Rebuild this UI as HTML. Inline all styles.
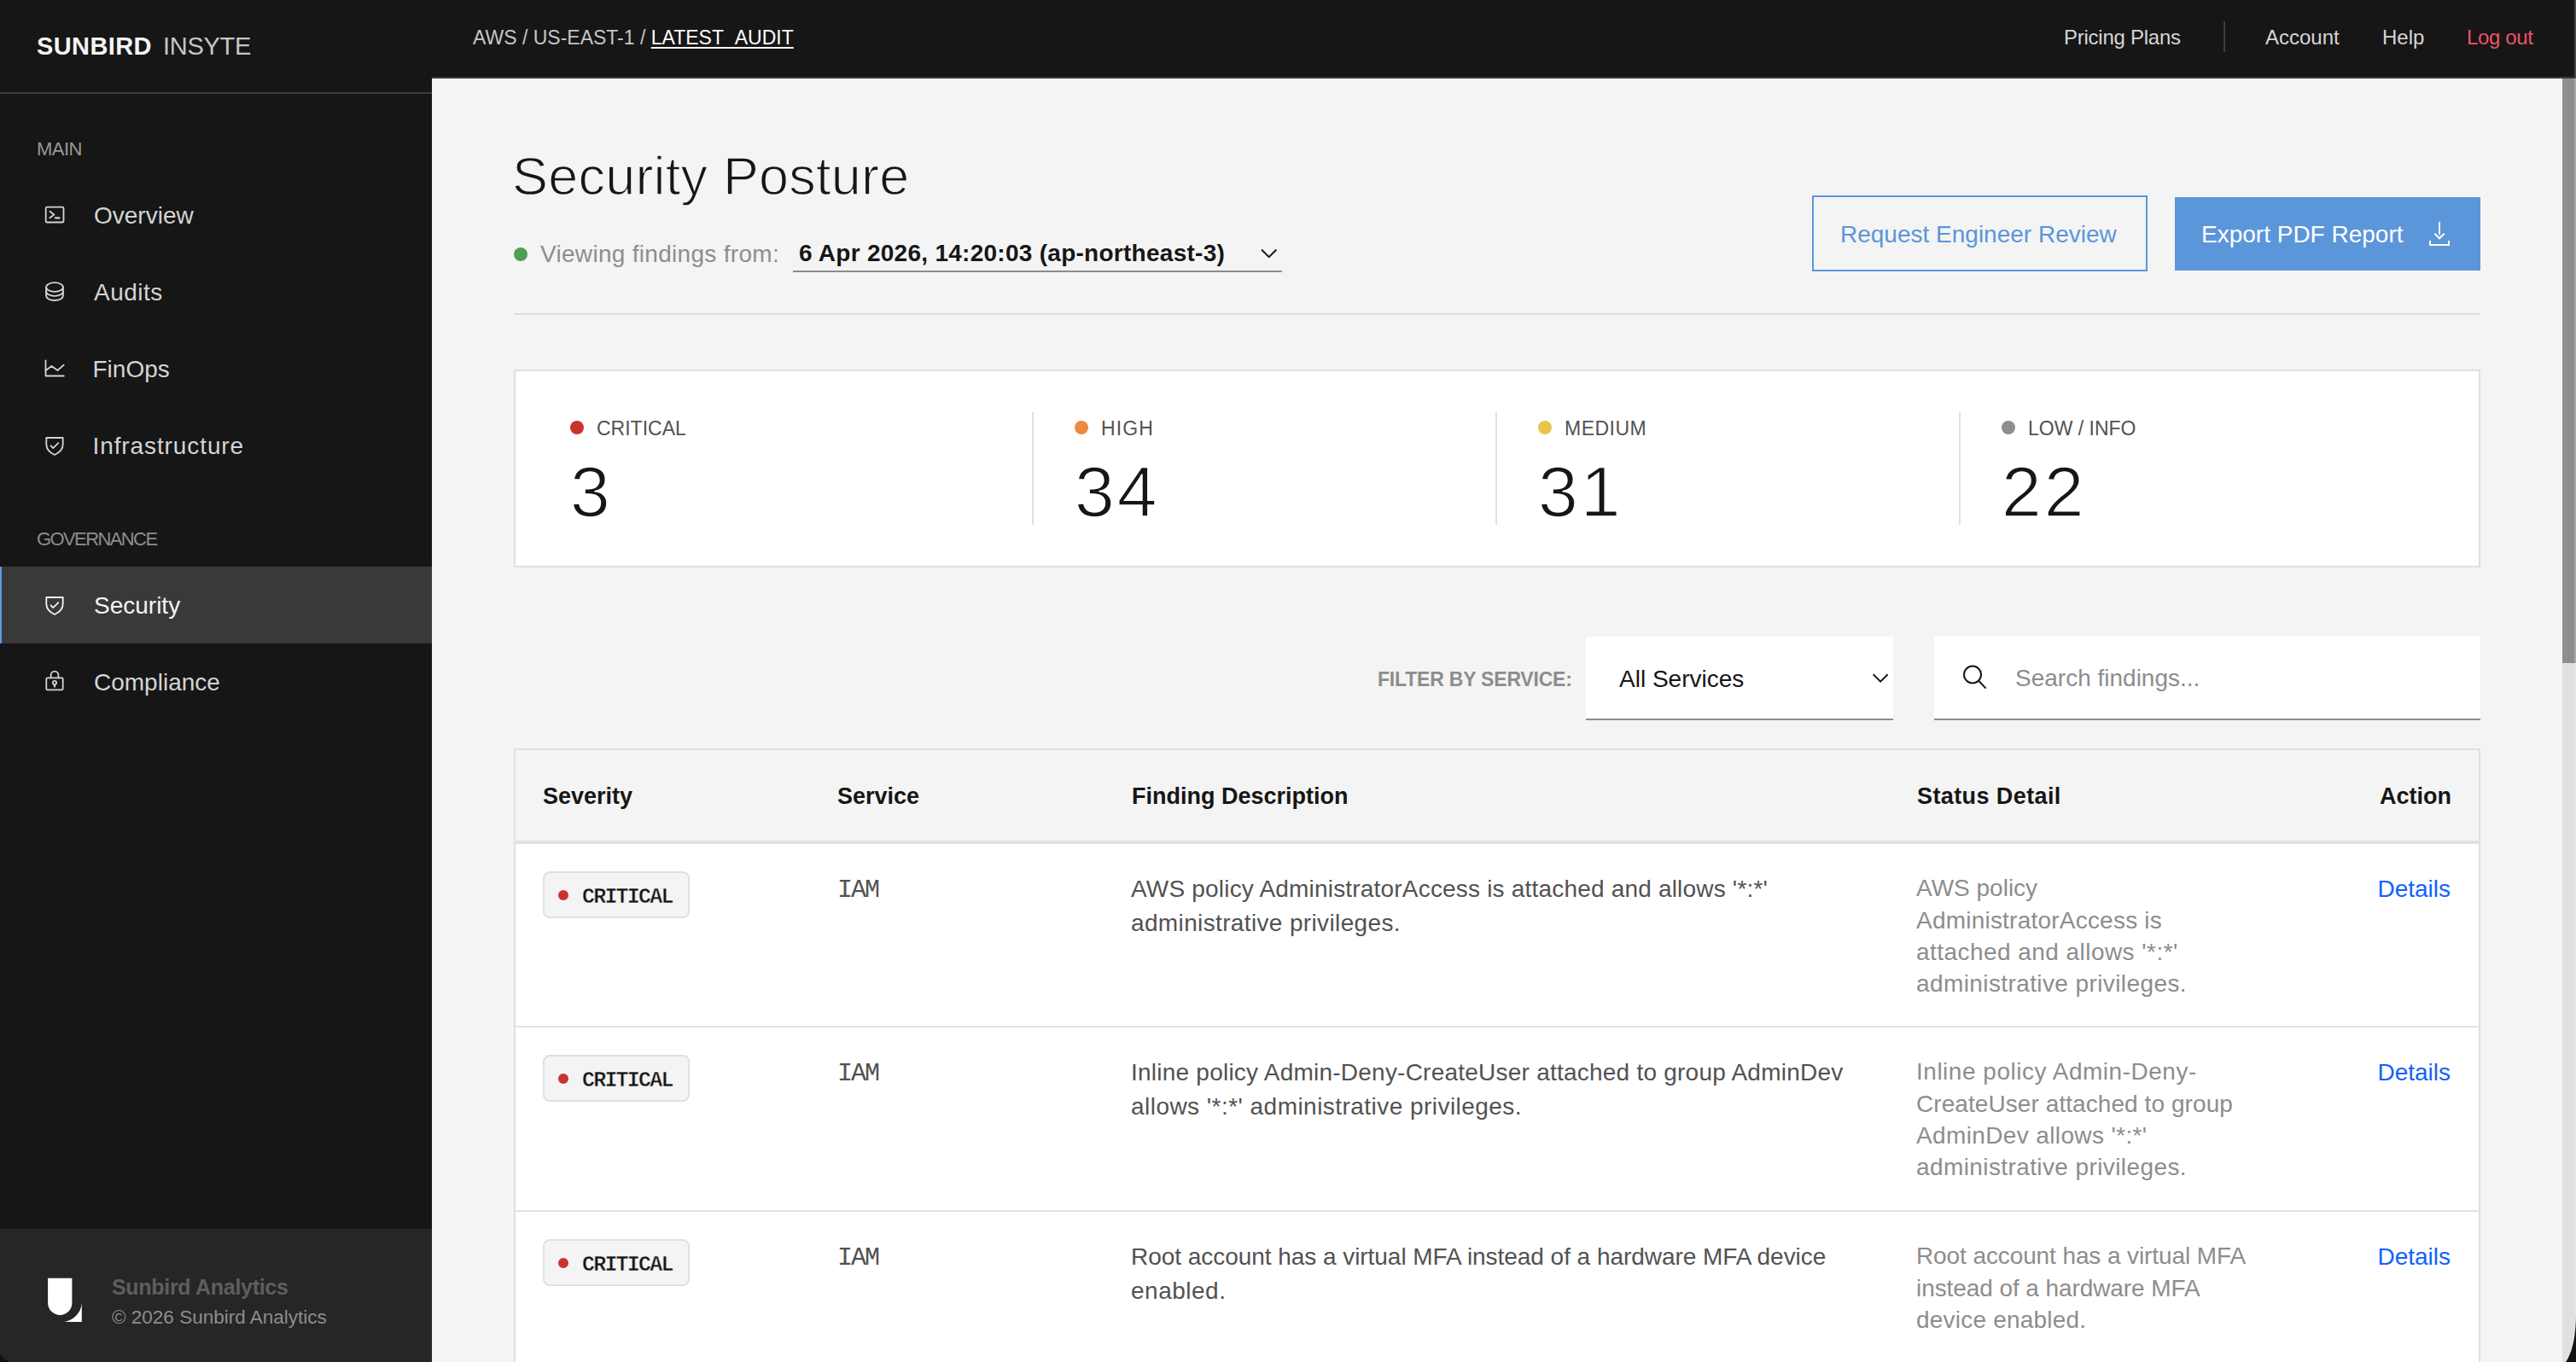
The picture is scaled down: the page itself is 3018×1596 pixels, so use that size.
<!DOCTYPE html>
<html><head><meta charset="utf-8"><title>Security Posture - Sunbird Insyte</title>
<style>
html,body{margin:0;padding:0;}
body{width:3018px;height:1596px;overflow:hidden;position:relative;background:#f4f4f4;font-family:"Liberation Sans", sans-serif;}
body>div,body>svg{position:absolute;}
.t{white-space:nowrap;}
</style></head><body>
<div style="left:0px;top:0px;width:506px;height:1596px;background:#161616"></div>
<div style="left:506px;top:0px;width:2512px;height:90px;background:#161616"></div>
<div style="left:506px;top:90px;width:2510px;height:2px;background:#393939"></div>
<div style="left:3002px;top:92px;width:16px;height:1504px;background:#e0e0e0"></div>
<div style="left:3002px;top:92px;width:14px;height:685px;background:#8e8e8e"></div>
<div style="left:3016px;top:92px;width:2px;height:1504px;background:#e6e6e6"></div>
<div style="left:3016px;top:92px;width:2px;height:685px;background:#a9a9a9"></div>
<div style="left:3016px;top:0px;width:2px;height:92px;background:#444"></div>
<div class="t" style="left:43px;top:35.95px;font-size:29px;line-height:36px;color:#f4f4f4;font-weight:700;letter-spacing:0.4px;">SUNBIRD</div>
<div class="t" style="left:191px;top:35.95px;font-size:29px;line-height:36px;color:#c6c6c6;letter-spacing:-0.3px;">INSYTE</div>
<div style="left:0px;top:108px;width:506px;height:2px;background:#393939"></div>
<div class="t" style="left:43px;top:161.37px;font-size:22px;line-height:28px;color:#999999;letter-spacing:-0.5px;">MAIN</div>
<div class="t" style="left:43px;top:618.37px;font-size:22px;line-height:28px;color:#8d8d8d;letter-spacing:-1.6px;">GOVERNANCE</div>
<svg style="left:44px;top:232px;" width="40" height="40" viewBox="0 0 40 40"><g fill="none" stroke="#d4d4d4" stroke-width="1.8" stroke-linecap="round" stroke-linejoin="round"><rect x="9.7" y="10.7" width="20.8" height="17.8" rx="1.6"/><path d="M14.4 15.7 L19.4 19.5 L14.4 23.3"/><path d="M20.9 23.3 H25.5" stroke-width="2.2"/></g></svg>
<div class="t" style="left:110px;top:235.29px;font-size:28px;line-height:35px;color:#d4d4d4;">Overview</div>
<svg style="left:44px;top:322px;" width="40" height="40" viewBox="0 0 40 40"><g fill="none" stroke="#d4d4d4" stroke-width="1.8" stroke-linecap="round" stroke-linejoin="round"><ellipse cx="20" cy="14.5" rx="9.9" ry="5.4"/><path d="M10.1 14.5 V24.6 A9.9 5.4 0 0 0 29.9 24.6 V14.5"/><path d="M10.1 19.5 A9.9 5.4 0 0 0 29.9 19.5"/></g></svg>
<div class="t" style="left:110px;top:325.29px;font-size:28px;line-height:35px;color:#d4d4d4;letter-spacing:0.5px;">Audits</div>
<svg style="left:44px;top:412px;" width="40" height="40" viewBox="0 0 40 40"><g fill="none" stroke="#d4d4d4" stroke-width="1.8" stroke-linecap="round" stroke-linejoin="round"><path d="M9.5 10.4 V28.5 H30.8"/><path d="M9.5 22.2 L16.4 17 L23.5 22 L30.7 15.6"/></g></svg>
<div class="t" style="left:108.5px;top:415.29px;font-size:28px;line-height:35px;color:#d4d4d4;">FinOps</div>
<svg style="left:44px;top:502px;" width="40" height="40" viewBox="0 0 40 40"><g fill="none" stroke="#d4d4d4" stroke-width="1.8" stroke-linecap="round" stroke-linejoin="round"><path d="M10.3 11 H29.7 V18.5 C29.7 24.5 25.5 28.5 20 31 C14.5 28.5 10.3 24.5 10.3 18.5 Z"/><path d="M15.6 20.3 L18.2 23.1 L24.4 17.1"/></g></svg>
<div class="t" style="left:108.5px;top:505.29px;font-size:28px;line-height:35px;color:#d4d4d4;letter-spacing:0.9px;">Infrastructure</div>
<div style="left:0px;top:664px;width:506px;height:90px;background:#393939"></div>
<div style="left:0px;top:664px;width:2px;height:90px;background:#5b9bea"></div>
<svg style="left:44px;top:689px;" width="40" height="40" viewBox="0 0 40 40"><g fill="none" stroke="#f4f4f4" stroke-width="1.8" stroke-linecap="round" stroke-linejoin="round"><path d="M10.3 11 H29.7 V18.5 C29.7 24.5 25.5 28.5 20 31 C14.5 28.5 10.3 24.5 10.3 18.5 Z"/><path d="M15.6 20.3 L18.2 23.1 L24.4 17.1"/></g></svg>
<div class="t" style="left:110px;top:692.29px;font-size:28px;line-height:35px;color:#f4f4f4;">Security</div>
<svg style="left:44px;top:779px;" width="40" height="40" viewBox="0 0 40 40"><g fill="none" stroke="#d4d4d4" stroke-width="1.8" stroke-linecap="round" stroke-linejoin="round"><rect x="10.3" y="15.3" width="19.4" height="14.1" rx="1.5"/><path d="M15.6 15.3 V12 A4.4 4.4 0 0 1 24.4 12 V15.3"/><circle cx="20" cy="20.9" r="2.1"/><path d="M20 23 V25.6" stroke-width="2.2"/></g></svg>
<div class="t" style="left:110px;top:782.29px;font-size:28px;line-height:35px;color:#d4d4d4;">Compliance</div>
<div style="left:0px;top:1440px;width:506px;height:156px;background:#262626"></div>
<svg style="left:50px;top:1490px;" width="50" height="66" viewBox="0 0 50 66"><path fill="#fff" d="M6.1 7.8 H34.4 V36.75 A14.15 14.15 0 0 1 6.1 36.75 Z"/><path fill="#fff" d="M45.8 36.8 V58.9 H25.2 A24 24 0 0 0 45.8 36.8 Z"/></svg>
<div class="t" style="left:131px;top:1492.83px;font-size:25px;line-height:31px;color:#5e5e5e;font-weight:700;letter-spacing:-0.3px;">Sunbird Analytics</div>
<div class="t" style="left:131px;top:1530.20px;font-size:22.5px;line-height:28px;color:#8d8d8d;">© 2026 Sunbird Analytics</div>
<div class="t" style="left:554px;top:29.53px;font-size:23px;line-height:29px;color:#c6c6c6;">AWS / US-EAST-1 / <span style="color:#fff;text-decoration:underline;text-decoration-thickness:2px;text-underline-offset:3px">LATEST_AUDIT</span></div>
<div class="t" style="left:2418px;top:28.68px;font-size:24px;line-height:30px;color:#d6d6d6;letter-spacing:-0.25px;">Pricing Plans</div>
<div style="left:2605px;top:25px;width:2px;height:36px;background:#3d3d3d"></div>
<div class="t" style="left:2654px;top:28.68px;font-size:24px;line-height:30px;color:#d6d6d6;">Account</div>
<div class="t" style="left:2791px;top:28.68px;font-size:24px;line-height:30px;color:#d6d6d6;">Help</div>
<div class="t" style="left:2890px;top:28.68px;font-size:24px;line-height:30px;color:#ec5468;letter-spacing:-0.35px;">Log out</div>
<div class="t" style="left:600px;top:167.16px;font-size:63px;line-height:79px;color:#161616;letter-spacing:0.2px;-webkit-text-stroke:1.4px #f4f4f4;">Security Posture</div>
<div style="left:602px;top:290px;width:16px;height:16px;background:#4f9f55;border-radius:50%"></div>
<div class="t" style="left:633px;top:280.29px;font-size:28px;line-height:35px;color:#8d8d8d;letter-spacing:0.3px;">Viewing findings from:</div>
<div class="t" style="left:936px;top:279.29px;font-size:28px;line-height:35px;color:#161616;font-weight:700;letter-spacing:0.27px;">6 Apr 2026, 14:20:03 (ap-northeast-3)</div>
<div style="left:929px;top:317px;width:573px;height:2px;background:#8d8d8d"></div>
<svg style="left:1474px;top:286px;" width="26" height="22" viewBox="0 0 26 22"><path d="M4 6.5 L12.7 15.2 L21.4 6.5" fill="none" stroke="#161616" stroke-width="2"/></svg>
<div style="left:602px;top:367px;width:2304px;height:2px;background:#dedede"></div>
<div style="left:2123px;top:229px;width:393px;height:89px;border:2px solid #5a96dc;box-sizing:border-box"></div>
<div class="t" style="left:2156px;top:256.79px;font-size:28px;line-height:35px;color:#5a96db;">Request Engineer Review</div>
<div style="left:2548px;top:231px;width:358px;height:86px;background:#5b96da"></div>
<div class="t" style="left:2579px;top:256.79px;font-size:28px;line-height:35px;color:#ffffff;">Export PDF Report</div>
<svg style="left:2840px;top:254px;" width="36" height="40" viewBox="0 0 36 40"><g fill="none" stroke="#fff" stroke-width="2"><path d="M18 6 V21"/><path d="M12.4 19.7 L18 25.3 L23.6 19.7"/><path d="M7 28 V33 H29 V28"/></g></svg>
<div style="left:602px;top:433px;width:2304px;height:232px;background:#fff;border:2px solid #e0e0e0;box-sizing:border-box"></div>
<div style="left:668px;top:493px;width:16px;height:16px;background:#c9332f;border-radius:50%"></div>
<div class="t" style="left:699px;top:487.53px;font-size:23px;line-height:29px;color:#525252;">CRITICAL</div>
<div class="t" style="left:668px;top:524.38px;font-size:84px;line-height:105px;color:#161616;-webkit-text-stroke:1.6px #ffffff;">3</div>
<div style="left:1209px;top:483px;width:2px;height:132px;background:#e0e0e0"></div>
<div style="left:1259px;top:493px;width:16px;height:16px;background:#ee8a3d;border-radius:50%"></div>
<div class="t" style="left:1290px;top:487.53px;font-size:23px;line-height:29px;color:#525252;letter-spacing:1.1px;">HIGH</div>
<div class="t" style="left:1259px;top:524.38px;font-size:84px;line-height:105px;color:#161616;letter-spacing:3px;-webkit-text-stroke:1.6px #ffffff;">34</div>
<div style="left:1752px;top:483px;width:2px;height:132px;background:#e0e0e0"></div>
<div style="left:1802px;top:493px;width:16px;height:16px;background:#e8c44a;border-radius:50%"></div>
<div class="t" style="left:1833px;top:487.53px;font-size:23px;line-height:29px;color:#525252;letter-spacing:0.5px;">MEDIUM</div>
<div class="t" style="left:1802px;top:524.38px;font-size:84px;line-height:105px;color:#161616;letter-spacing:3px;-webkit-text-stroke:1.6px #ffffff;">31</div>
<div style="left:2295px;top:483px;width:2px;height:132px;background:#e0e0e0"></div>
<div style="left:2345px;top:493px;width:16px;height:16px;background:#8e8e8e;border-radius:50%"></div>
<div class="t" style="left:2376px;top:487.53px;font-size:23px;line-height:29px;color:#525252;">LOW / INFO</div>
<div class="t" style="left:2345px;top:524.38px;font-size:84px;line-height:105px;color:#161616;letter-spacing:3px;-webkit-text-stroke:1.6px #ffffff;">22</div>
<div class="t" style="left:1614px;top:781.53px;font-size:23px;line-height:29px;color:#8d8d8d;font-weight:700;letter-spacing:-0.2px;">FILTER BY SERVICE:</div>
<div style="left:1858px;top:746px;width:360px;height:98px;background:#fff;border-bottom:2px solid #8d8d8d;box-sizing:border-box"></div>
<div class="t" style="left:1897px;top:778.29px;font-size:28px;line-height:35px;color:#161616;">All Services</div>
<svg style="left:2190px;top:784px;" width="26" height="22" viewBox="0 0 26 22"><path d="M4.7 6.3 L13.15 14.7 L21.6 6.3" fill="none" stroke="#161616" stroke-width="2"/></svg>
<div style="left:2266px;top:745px;width:640px;height:99px;background:#fff;border-bottom:2px solid #8d8d8d;box-sizing:border-box"></div>
<svg style="left:2290px;top:770px;" width="44" height="44" viewBox="0 0 44 44"><g fill="none" stroke="#161616" stroke-width="2"><circle cx="21" cy="20.5" r="10"/><path d="M28.2 27.8 L36.6 36.6"/></g></svg>
<div class="t" style="left:2361px;top:776.79px;font-size:28px;line-height:35px;color:#8d8d8d;">Search findings...</div>
<div style="left:602px;top:877px;width:2304px;height:721px;background:#fff;border:2px solid #e0e0e0;border-bottom:none;box-sizing:border-box"></div>
<div style="left:604px;top:879px;width:2300px;height:106px;background:#f4f4f4"></div>
<div style="left:604px;top:985px;width:2300px;height:4px;background:#e0e0e0"></div>
<div class="t" style="left:636px;top:915.64px;font-size:27px;line-height:34px;color:#161616;font-weight:700;">Severity</div>
<div class="t" style="left:981px;top:915.64px;font-size:27px;line-height:34px;color:#161616;font-weight:700;">Service</div>
<div class="t" style="left:1326px;top:915.64px;font-size:27px;line-height:34px;color:#161616;font-weight:700;">Finding Description</div>
<div class="t" style="left:2246px;top:915.64px;font-size:27px;line-height:34px;color:#161616;font-weight:700;letter-spacing:0.4px;">Status Detail</div>
<div class="t" style="left:2787px;top:915.64px;font-size:27px;line-height:34px;color:#161616;font-weight:700;width:85px;text-align:right;">Action</div>
<div style="left:636px;top:1021px;width:172px;height:55px;background:#f4f4f4;border:2px solid #e0e0e0;border-radius:8px;box-sizing:border-box"></div>
<div style="left:654px;top:1043px;width:12px;height:12px;background:#c93232;border-radius:50%"></div>
<div class="t" style="left:682px;top:1036.35px;font-size:25px;line-height:31px;color:#161616;font-weight:700;font-family:'Liberation Mono', monospace;letter-spacing:-1.8px;-webkit-text-stroke:0.5px #f4f4f4;">CRITICAL</div>
<div class="t" style="left:981px;top:1023.52px;font-size:30px;line-height:38px;color:#525252;font-family:'Liberation Mono', monospace;letter-spacing:-2px;">IAM</div>
<div class="t" style="left:1325px;top:1023.79px;font-size:28px;line-height:35px;color:#525252;letter-spacing:0.19px;">AWS policy AdministratorAccess is attached and allows '*:*'</div>
<div class="t" style="left:1325px;top:1063.79px;font-size:28px;line-height:35px;color:#525252;letter-spacing:0.36px;">administrative privileges.</div>
<div class="t" style="left:2245px;top:1023.29px;font-size:28px;line-height:35px;color:#8d8d8d;">AWS policy</div>
<div class="t" style="left:2245px;top:1060.59px;font-size:28px;line-height:35px;color:#8d8d8d;letter-spacing:0.219px;">AdministratorAccess is</div>
<div class="t" style="left:2245px;top:1097.89px;font-size:28px;line-height:35px;color:#8d8d8d;letter-spacing:0.45px;">attached and allows '*:*'</div>
<div class="t" style="left:2245px;top:1135.19px;font-size:28px;line-height:35px;color:#8d8d8d;letter-spacing:0.4px;">administrative privileges.</div>
<div class="t" style="left:2771px;top:1023.79px;font-size:28px;line-height:35px;color:#0f62fe;width:100px;text-align:right;">Details</div>
<div style="left:604px;top:1202px;width:2300px;height:2px;background:#e0e0e0"></div>
<div style="left:636px;top:1236px;width:172px;height:55px;background:#f4f4f4;border:2px solid #e0e0e0;border-radius:8px;box-sizing:border-box"></div>
<div style="left:654px;top:1258px;width:12px;height:12px;background:#c93232;border-radius:50%"></div>
<div class="t" style="left:682px;top:1251.35px;font-size:25px;line-height:31px;color:#161616;font-weight:700;font-family:'Liberation Mono', monospace;letter-spacing:-1.8px;-webkit-text-stroke:0.5px #f4f4f4;">CRITICAL</div>
<div class="t" style="left:981px;top:1238.52px;font-size:30px;line-height:38px;color:#525252;font-family:'Liberation Mono', monospace;letter-spacing:-2px;">IAM</div>
<div class="t" style="left:1325px;top:1238.79px;font-size:28px;line-height:35px;color:#525252;letter-spacing:0.23px;">Inline policy Admin-Deny-CreateUser attached to group AdminDev</div>
<div class="t" style="left:1325px;top:1278.79px;font-size:28px;line-height:35px;color:#525252;letter-spacing:0.458px;">allows '*:*' administrative privileges.</div>
<div class="t" style="left:2245px;top:1238.29px;font-size:28px;line-height:35px;color:#8d8d8d;letter-spacing:0.513px;">Inline policy Admin-Deny-</div>
<div class="t" style="left:2245px;top:1275.59px;font-size:28px;line-height:35px;color:#8d8d8d;letter-spacing:0.074px;">CreateUser attached to group</div>
<div class="t" style="left:2245px;top:1312.89px;font-size:28px;line-height:35px;color:#8d8d8d;letter-spacing:0.37px;">AdminDev allows '*:*'</div>
<div class="t" style="left:2245px;top:1350.19px;font-size:28px;line-height:35px;color:#8d8d8d;letter-spacing:0.4px;">administrative privileges.</div>
<div class="t" style="left:2771px;top:1238.79px;font-size:28px;line-height:35px;color:#0f62fe;width:100px;text-align:right;">Details</div>
<div style="left:604px;top:1418px;width:2300px;height:2px;background:#e0e0e0"></div>
<div style="left:636px;top:1452px;width:172px;height:55px;background:#f4f4f4;border:2px solid #e0e0e0;border-radius:8px;box-sizing:border-box"></div>
<div style="left:654px;top:1474px;width:12px;height:12px;background:#c93232;border-radius:50%"></div>
<div class="t" style="left:682px;top:1467.35px;font-size:25px;line-height:31px;color:#161616;font-weight:700;font-family:'Liberation Mono', monospace;letter-spacing:-1.8px;-webkit-text-stroke:0.5px #f4f4f4;">CRITICAL</div>
<div class="t" style="left:981px;top:1454.52px;font-size:30px;line-height:38px;color:#525252;font-family:'Liberation Mono', monospace;letter-spacing:-2px;">IAM</div>
<div class="t" style="left:1325px;top:1454.79px;font-size:28px;line-height:35px;color:#525252;letter-spacing:-0.045px;">Root account has a virtual MFA instead of a hardware MFA device</div>
<div class="t" style="left:1325px;top:1494.79px;font-size:28px;line-height:35px;color:#525252;letter-spacing:0.5px;">enabled.</div>
<div class="t" style="left:2245px;top:1454.29px;font-size:28px;line-height:35px;color:#8d8d8d;letter-spacing:-0.103px;">Root account has a virtual MFA</div>
<div class="t" style="left:2245px;top:1491.59px;font-size:28px;line-height:35px;color:#8d8d8d;letter-spacing:-0.083px;">instead of a hardware MFA</div>
<div class="t" style="left:2245px;top:1528.89px;font-size:28px;line-height:35px;color:#8d8d8d;letter-spacing:0.214px;">device enabled.</div>
<div class="t" style="left:2771px;top:1454.79px;font-size:28px;line-height:35px;color:#0f62fe;width:100px;text-align:right;">Details</div>
<svg style="left:2990px;top:1540px;" width="28" height="56" viewBox="0 0 28 56"><path d="M28 0 V56 H16 C22 48 28 30 28 0 Z" fill="#111"/></svg>
<svg style="left:0px;top:1580px;" width="16" height="16" viewBox="0 0 16 16"><path d="M0 6 C3 11 6 14 12 16 H0 Z" fill="#111"/></svg>
</body></html>
